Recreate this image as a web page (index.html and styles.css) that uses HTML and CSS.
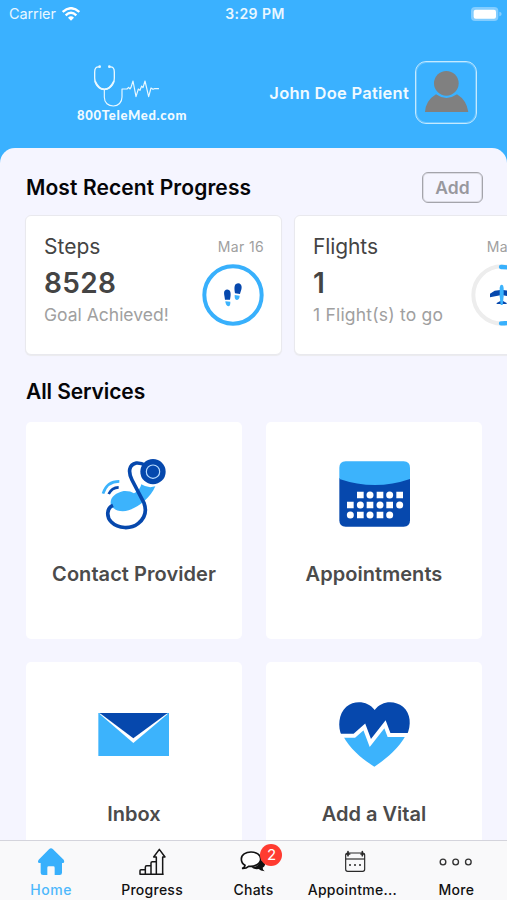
FILE: index.html
```html
<!DOCTYPE html>
<html lang="en">
<head>
<meta charset="utf-8">
<title>800TeleMed</title>
<link rel="stylesheet" href="styles.css">
</head>
<body>
<div class="app">
  <div class="status">
    <div class="carrier"><span>Carrier</span>
      <svg width="18" height="14" viewBox="0 0 54 42" fill="none" stroke="#fff" stroke-width="7"><path d="M2 15Q27-8 52 15"/><path d="M11 25Q27 10 43 25"/><path d="M18 32Q27 24 36 32L27 41Z" fill="#fff" stroke="none"/></svg>
    </div>
    <div class="clock">3:29 PM</div>
    <svg class="battery" width="31" height="14" viewBox="0 0 93 42"><rect width="82" height="42" rx="12" fill="#83cdff"/><path d="M85 14Q92 15 92 21T85 28Z" fill="#83cdff"/><rect x="8" y="8" width="67" height="27" rx="6" fill="#fff"/></svg>
  </div>
  <header class="header">
    <div class="brand">
      <svg width="66" height="43" viewBox="279 192 198 129" fill="none" stroke="#e9f8ff" stroke-width="4" stroke-linecap="round" stroke-linejoin="round"><path d="M298 201Q284 199 284 216V234C284 255 298 268 313 268S343 255 343 234V216Q343 199 329 201"/><path d="M286 245Q296 268 313 268T341 245" stroke-width="5"/><circle cx="299" cy="200" r="2"/><circle cx="328" cy="200" r="2"/><path d="M313 269V292C313 309 325 318 340 318S366 307 366 291V267H381L386 262 390 267 393 262 399 243 408 290 415 267 420 271 425 258 429 263 435 243 446 290 453 264 459 268 463 266H476" stroke-width="3.5"/></svg>
      <div class="brand-name">800TeleMed.com</div>
    </div>
    <div class="user"><span class="user-name">John Doe Patient</span>
      <div class="avatar"><svg width="45" height="43" viewBox="0 0 135 129" fill="#808080"><circle cx="67" cy="37" r="37"/><path d="M3 123Q5 89 36 70Q67 92 99 70Q128 88 133 123Z"/></svg></div>
    </div>
  </header>
  <main class="sheet">
    <div class="section-head"><h2 class="t-progress">Most Recent Progress</h2><button class="add">Add</button></div>
    <div class="stats">
      <section class="stat">
        <div class="stat-text"><div class="stat-name">Steps</div><div class="stat-value">8528</div><div class="stat-note">Goal Achieved!</div></div>
        <div class="stat-side"><div class="date">Mar 16</div>
          <svg width="62" height="62" viewBox="607 311 186 186"><circle cx="700" cy="404" r="86" fill="none" stroke="#38b0fc" stroke-width="12"/><g fill="#0648ad"><path d="M676 418C675 407 671 397 675 391Q682 384 689 390C695 396 693 408 691 418Z"/><path d="M706 399C704 386 703 375 709 371Q717 366 724 373C729 382 723 392 721 401Z"/></g><g fill="#3cb3fc"><path d="M677 423L692 424Q693 436 686 438Q678 437 677 423Z"/><path d="M705 404L720 406Q719 419 711 419Q704 417 705 404Z"/></g></svg>
        </div>
      </section>
      <section class="stat">
        <div class="stat-text"><div class="stat-name n-flights">Flights</div><div class="stat-value">1</div><div class="stat-note n-flight">1 Flight(s) to go</div></div>
        <div class="stat-side"><div class="date">Mar 16</div>
          <svg width="62" height="62" viewBox="574 311 186 186"><circle cx="667" cy="404" r="86" fill="none" stroke="#ededed" stroke-width="12"/><path d="M664 320H667A84 84 0 0 1 667 489H664" fill="none" stroke="#38b0fc" stroke-width="13" stroke-linecap="round"/><path d="M662 389L645 391 631 400V411L662 405ZM670 389L687 391 702 400V411L670 405ZM662 422L651 428V431L681 431V428L670 422Z" fill="#0648ad"/><path d="M660 383Q661 373 666 373T672 383V408L669 434H663L660 408Z" fill="#3cb3fc"/></svg>
        </div>
      </section>
    </div>
    <h2 class="services-title">All Services</h2>
    <div class="services">
      <div class="service">
        <svg width="90" height="90" viewBox="-3 0 270 270" fill="none"><path d="M154 103Q174 116 196 109C182 142 147 171 116 181C93 188 71 181 63 165C57 145 76 128 101 123Q121 122 132 130Q150 121 154 103Z" fill="#3cb3fc"/><path d="M69 166C49 174 49 202 64 216C85 237 123 238 145 220C166 203 170 181 162 159L126 90C114 66 116 44 139 39Q153 38 168 47" stroke="#0648ad" stroke-width="11"/><circle cx="189" cy="65" r="38" fill="#0648ad"/><circle cx="189" cy="65" r="20" stroke="#b9dcff" stroke-width="3.5"/><path d="M39 131Q50 94 88 94" stroke="#3cb3fc" stroke-width="8"/><path d="M56 132Q65 113 86 112" stroke="#0648ad" stroke-width="8"/></svg>
        <span class="l-contact">Contact Provider</span>
      </div>
      <div class="service">
        <svg width="90" height="90" viewBox="12 0 270 270"><path d="M43 84H255V211Q255 230 236 230H62Q43 230 43 211Z" fill="#0648ad"/><path d="M43 87V54Q43 34 62 34H236Q255 34 255 54V87Q150 123 43 87Z" fill="#3cb3fc"/><g fill="#fff"><path d="M96 125h20v20H96zM155 125h20v20h-20zM214 125h20v20h-20zM66 155h20v20H66zM125 155h20v20h-20zM184 155h20v20h-20zM96 185h20v20H96zM155 185h20v20h-20z"/><circle cx="135" cy="135" r="10.5"/><circle cx="194" cy="135" r="10.5"/><circle cx="106" cy="165" r="10.5"/><circle cx="165" cy="165" r="10.5"/><circle cx="224" cy="165" r="10.5"/><circle cx="76" cy="195" r="10.5"/><circle cx="135" cy="195" r="10.5"/><circle cx="194" cy="195" r="10.5"/></g></svg>
        <span class="l-appt">Appointments</span>
      </div>
      <div class="service">
        <svg width="90" height="90" viewBox="12 0 270 270"><path d="M40 69H252V198H40Z" fill="#3cb3fc"/><path d="M43 71H249L145 159Z" fill="#fff"/><path d="M44 69H248L145 145Z" fill="#0648ad"/></svg>
        <span class="l-inbox">Inbox</span>
      </div>
      <div class="service">
        <svg width="90" height="90" viewBox="12 0 270 270"><path d="M50 137C38 111 40 71 64 50C91 29 129 34 149 60C170 31 209 30 234 50C258 71 259 105 246 135H193L180 105 136 159 118 113 88 137Z" fill="#0648ad"/><path d="M54 137H88L118 113 136 159 180 105 193 135H243C218 180 177 211 148 230C117 210 78 181 54 137Z" fill="#3cb3fc"/><path d="M44 137H88L118 111 136 159 180 103 192 135H256" fill="none" stroke="#fff" stroke-width="12"/></svg>
        <span class="l-vital">Add a Vital</span>
      </div>
    </div>
  </main>
  <nav class="tabs">
    <a class="tab active"><svg width="30" height="30" viewBox="109 36 90 90" fill="#38b0fc"><path d="M148 43Q154 37 160 43L192 74Q196 82 190 84H187V113Q187 120 180 120H165V98Q165 94 161 94H147Q143 94 143 98V120H130Q123 120 123 113V84H119Q112 82 117 74Z"/></svg><span class="l-home">Home</span></a>
    <a class="tab"><svg width="30" height="30" viewBox="412 36 90 90" fill="none" stroke="#161616" stroke-width="4.5" stroke-linejoin="round"><path d="M421 118V107Q421 104 424 104H437V118ZM437 118V97Q437 92 441 92H454V118ZM454 118V84Q454 80 458 80H470V118ZM470 118V66H462L479 43 496 66H489V118ZM421 118H492"/></svg><span class="l-prog">Progress</span></a>
    <a class="tab"><span class="badge-wrap"><svg width="30" height="30" viewBox="24 36 90 90"><path d="M92 75C110 81 107 94 98 98Q98 104 104 109Q91 108 86 102Q72 104 64 97Q86 97 92 75Z" fill="#111"/><path d="M45 91Q43 99 36 100Q48 101 56 94C74 96 92 87 92 72C92 59 79 51 63 51S34 59 34 72Q34 85 45 91Z" fill="#fff" stroke="#111" stroke-width="5"/></svg><b class="badge">2</b></span><span class="l-chats">Chats</span></a>
    <a class="tab"><svg width="30" height="30" viewBox="329 36 90 90" fill="none" stroke="#292929" stroke-width="3.5"><rect x="346" y="54" width="57" height="55" rx="6"/><path d="M346 72H403" /><path d="M353 50V62M396 50V62" stroke-width="5" stroke-linecap="round"/><path d="M347 57H360M390 57H402" stroke-width="5"/><path d="M356 90H362M371 90H377M386 90H392" stroke-width="5"/></svg><span class="l-tabappt">Appointme...</span></a>
    <a class="tab"><svg width="36" height="30" viewBox="625 36 108 90" fill="none" stroke="#333" stroke-width="4"><circle cx="640" cy="81" r="8.5"/><circle cx="678" cy="81" r="8.5"/><circle cx="716" cy="81" r="8.5"/></svg><span class="l-more">More</span></a>
  </nav>
</div>
</body>
</html>
```
FILE: styles.css
```css
* { box-sizing: border-box; }
body { margin: 0; background: #3ab1ff; font-family: Inter, "Liberation Sans", sans-serif; overflow: hidden; }
svg { display: block; flex: none; }
.app { width: 507px; height: 900px; display: flex; flex-direction: column; overflow: hidden; }
.status { height: 27px; flex: none; display: grid; grid-template-columns: 1fr auto 1fr; align-items: center; padding: 0 6px 0 9px; color: #e9f7ff; font-size: 14.5px; }
.carrier { display: flex; align-items: center; gap: 6px; letter-spacing: -.1px; }
.clock { font-weight: 600; font-size: 14px; letter-spacing: .45px; }
.battery { justify-self: end; margin-right: -1px; }
.header { height: 121px; flex: none; display: flex; justify-content: space-between; padding: 34px 30px 0 77px; color: #f0faff; }
.brand { display: flex; flex-direction: column; padding-top: 3px; }
.brand svg { margin-left: 16px; }
.brand-name { font: 900 13px/16px Lato, sans-serif; letter-spacing: .7px; white-space: nowrap; }
.user { display: flex; height: 63px; align-items: center; gap: 6px; }
.user-name { font-weight: 600; font-size: 16.5px; letter-spacing: .25px; white-space: nowrap; }
.avatar { width: 62px; height: 63px; border: 1px solid #c4eaff; box-shadow: inset 0 0 0 1px #6cc5ff; border-radius: 11px; display: flex; justify-content: center; padding-top: 9px; }
.sheet { flex: 1; min-height: 0; background: #f5f5ff; border-radius: 15px 15px 0 0; padding: 24px 24px 0 26px; overflow: hidden; }
h2 { margin: 0; font-size: 21px; line-height: 32px; font-weight: 600; color: #050508; white-space: nowrap; }
.t-progress { letter-spacing: .1px; }
.section-head { display: flex; justify-content: space-between; height: 31px; }
.add { width: 61px; height: 31px; padding: 0; border: 1px solid #a4a4ab; box-shadow: inset 0 0 0 1px #dcdce4; border-radius: 6px; background: transparent; color: #98989e; font: 600 17.5px Inter, sans-serif; }
.stats { display: flex; gap: 12px; margin: 12px 0 0 -1px; }
.stat { flex: none; width: 257px; height: 140px; background: #fff; border: 1px solid #e9e9ee; border-radius: 6px; display: flex; justify-content: space-between; padding: 17px 17px 0 18px; box-shadow: 0 1px 1px #ebebee; }
.stat-text { white-space: nowrap; }
.stat-name { font-size: 21px; line-height: 28px; color: #444; }
.n-flights { letter-spacing: -.1px; }
.stat-value { font-size: 28px; line-height: 34px; font-weight: 600; letter-spacing: .3px; color: #444; margin-top: 5px; }
.stat-note { font-size: 17.5px; line-height: 24px; color: #a0a0a0; margin-top: 3px; }
.n-flight { letter-spacing: .2px; }
.stat-side { display: flex; flex-direction: column; align-items: flex-end; }
.date { font-size: 14px; line-height: 28px; letter-spacing: .35px; color: #a0a0a0; white-space: nowrap; }
.stat-side svg { margin-top: 3px; }
.services-title { margin-top: 21px; letter-spacing: -.1px; }
.services { display: grid; grid-template-columns: 216px 216px; gap: 24px; margin-top: 14px; }
.service { height: 217px; margin-bottom: -1px; background: #fff; border-radius: 5px; padding-top: 28px; display: flex; flex-direction: column; align-items: center; }
.service span { margin-top: 20px; font-weight: 600; font-size: 20px; line-height: 28px; color: #4b4b4b; white-space: nowrap; }
.l-contact, .l-appt { letter-spacing: .05px; }
.tabs { flex: none; height: 60px; background: #f9f9fa; border-top: 1px solid #d4d4dc; display: grid; grid-template-columns: repeat(5, 1fr); }
.tab { display: flex; flex-direction: column; align-items: center; padding-top: 6px; color: #111; }
.tab > span:last-child { font-weight: 500; font-size: 14px; line-height: 18px; margin-top: 4px; letter-spacing: .25px; white-space: nowrap; }
.tab > .l-home:last-child { color: #4db8fc; letter-spacing: .6px; margin-left: 1px; }
.tab > .l-tabappt:last-child { letter-spacing: .3px; margin-left: -5px; }
.tab > .l-more:last-child { letter-spacing: .3px; }
.badge-wrap { position: relative; }
.badge { position: absolute; left: 22px; top: -3px; width: 22px; height: 22px; border-radius: 11px; background: #ff3b30; color: #fff; font-weight: 400; font-size: 15px; line-height: 22px; text-align: center; }
```
